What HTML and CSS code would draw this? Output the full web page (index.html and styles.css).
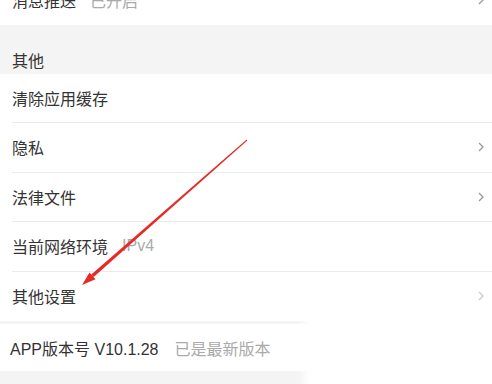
FILE: index.html
```html
<!DOCTYPE html>
<html lang="zh-CN">
<head>
    <meta charset="UTF-8">
    <title>设置</title>
    <link rel="stylesheet" href="styles.css">
</head>
<body>
    <div id="settings">
        <div class="row row-top">
            <span class="label">消息推送</span>
            <span class="value">已开启</span>
            <svg class="chevron" viewBox="0 0 6 10"><path d="M1 1 L5 5 L1 9"/></svg>
        </div>
        <div class="section-title">其他</div>
        <div class="group">
            <div class="row">
                <span class="label">清除应用缓存</span>
            </div>
            <div class="row">
                <span class="label">隐私</span>
                <svg class="chevron" viewBox="0 0 6 10"><path d="M1 1 L5 5 L1 9"/></svg>
            </div>
            <div class="row">
                <span class="label">法律文件</span>
                <svg class="chevron" viewBox="0 0 6 10"><path d="M1 1 L5 5 L1 9"/></svg>
            </div>
            <div class="row">
                <span class="label">当前网络环境</span>
                <span class="value">IPv4</span>
            </div>
            <div class="row last">
                <span class="label">其他设置</span>
                <svg class="chevron faint" viewBox="0 0 6 10"><path d="M1 1 L5 5 L1 9"/></svg>
            </div>
        </div>
        <div class="group version">
            <div class="row last">
                <span class="label">APP版本号 V10.1.28</span>
                <span class="value">已是最新版本</span>
            </div>
        </div>
    </div>

    <!-- red annotation arrow drawn over the screenshot -->
    <svg id="arrow" viewBox="0 0 492 384">
        <path class="shaft" d="M247.3 140.4 L246.7 139.6 L91.3 274.5 L93.7 277.1 Z"/>
        <path class="head" d="M82 285 L89.5 272.4 L95.5 279.2 Z"/>
    </svg>
    <div id="glare"></div>
</body>
</html>
```

FILE: styles.css
```css
body {
    margin: 0;
    font-family: "Liberation Sans", "Noto Sans CJK SC", sans-serif;
    background-color: #f4f4f4;
    color: #333;
    overflow: hidden;
    height: 384px;
    position: relative;
}
#settings {
    margin-top: -25px;
}
.row {
    display: flex;
    align-items: center;
    height: 49.5px;
    margin-left: 12px;
    padding-right: 8px;
    border-bottom: 1px solid #ebebeb;
    font-size: 16px;
    box-sizing: border-box;
}
.row-top {
    background-color: #fff;
    margin-left: 0;
    padding-left: 12px;
    border-bottom: none;
}
.group {
    background-color: #fff;
}
.group .row.last {
    border-bottom: none;
}
.version {
    margin-top: 3px;
}
.version .row {
    height: 47px;
    margin-left: 10px;
}
.section-title {
    height: 49px;
    box-sizing: border-box;
    padding: 23px 12px 0;
    font-size: 16px;
    color: #333;
}
.label {
    color: #333;
}
.value {
    margin-left: 14px;
    color: #aaa;
}
.version .value {
    margin-left: 16px;
}
.chevron {
    width: 6px;
    height: 10px;
    margin-left: auto;
    fill: none;
    stroke: #999;
    stroke-width: 1.3;
}
.chevron.faint {
    opacity: 0.5;
}
#arrow {
    position: absolute;
    left: 0;
    top: 0;
    width: 492px;
    height: 384px;
    pointer-events: none;
}
#arrow .shaft,
#arrow .head {
    fill: #e52b26;
}
#glare {
    position: absolute;
    left: 310px;
    top: 318px;
    width: 200px;
    height: 80px;
    background-color: #fff;
    box-shadow: 0 0 8px 6px #fff;
}
```
